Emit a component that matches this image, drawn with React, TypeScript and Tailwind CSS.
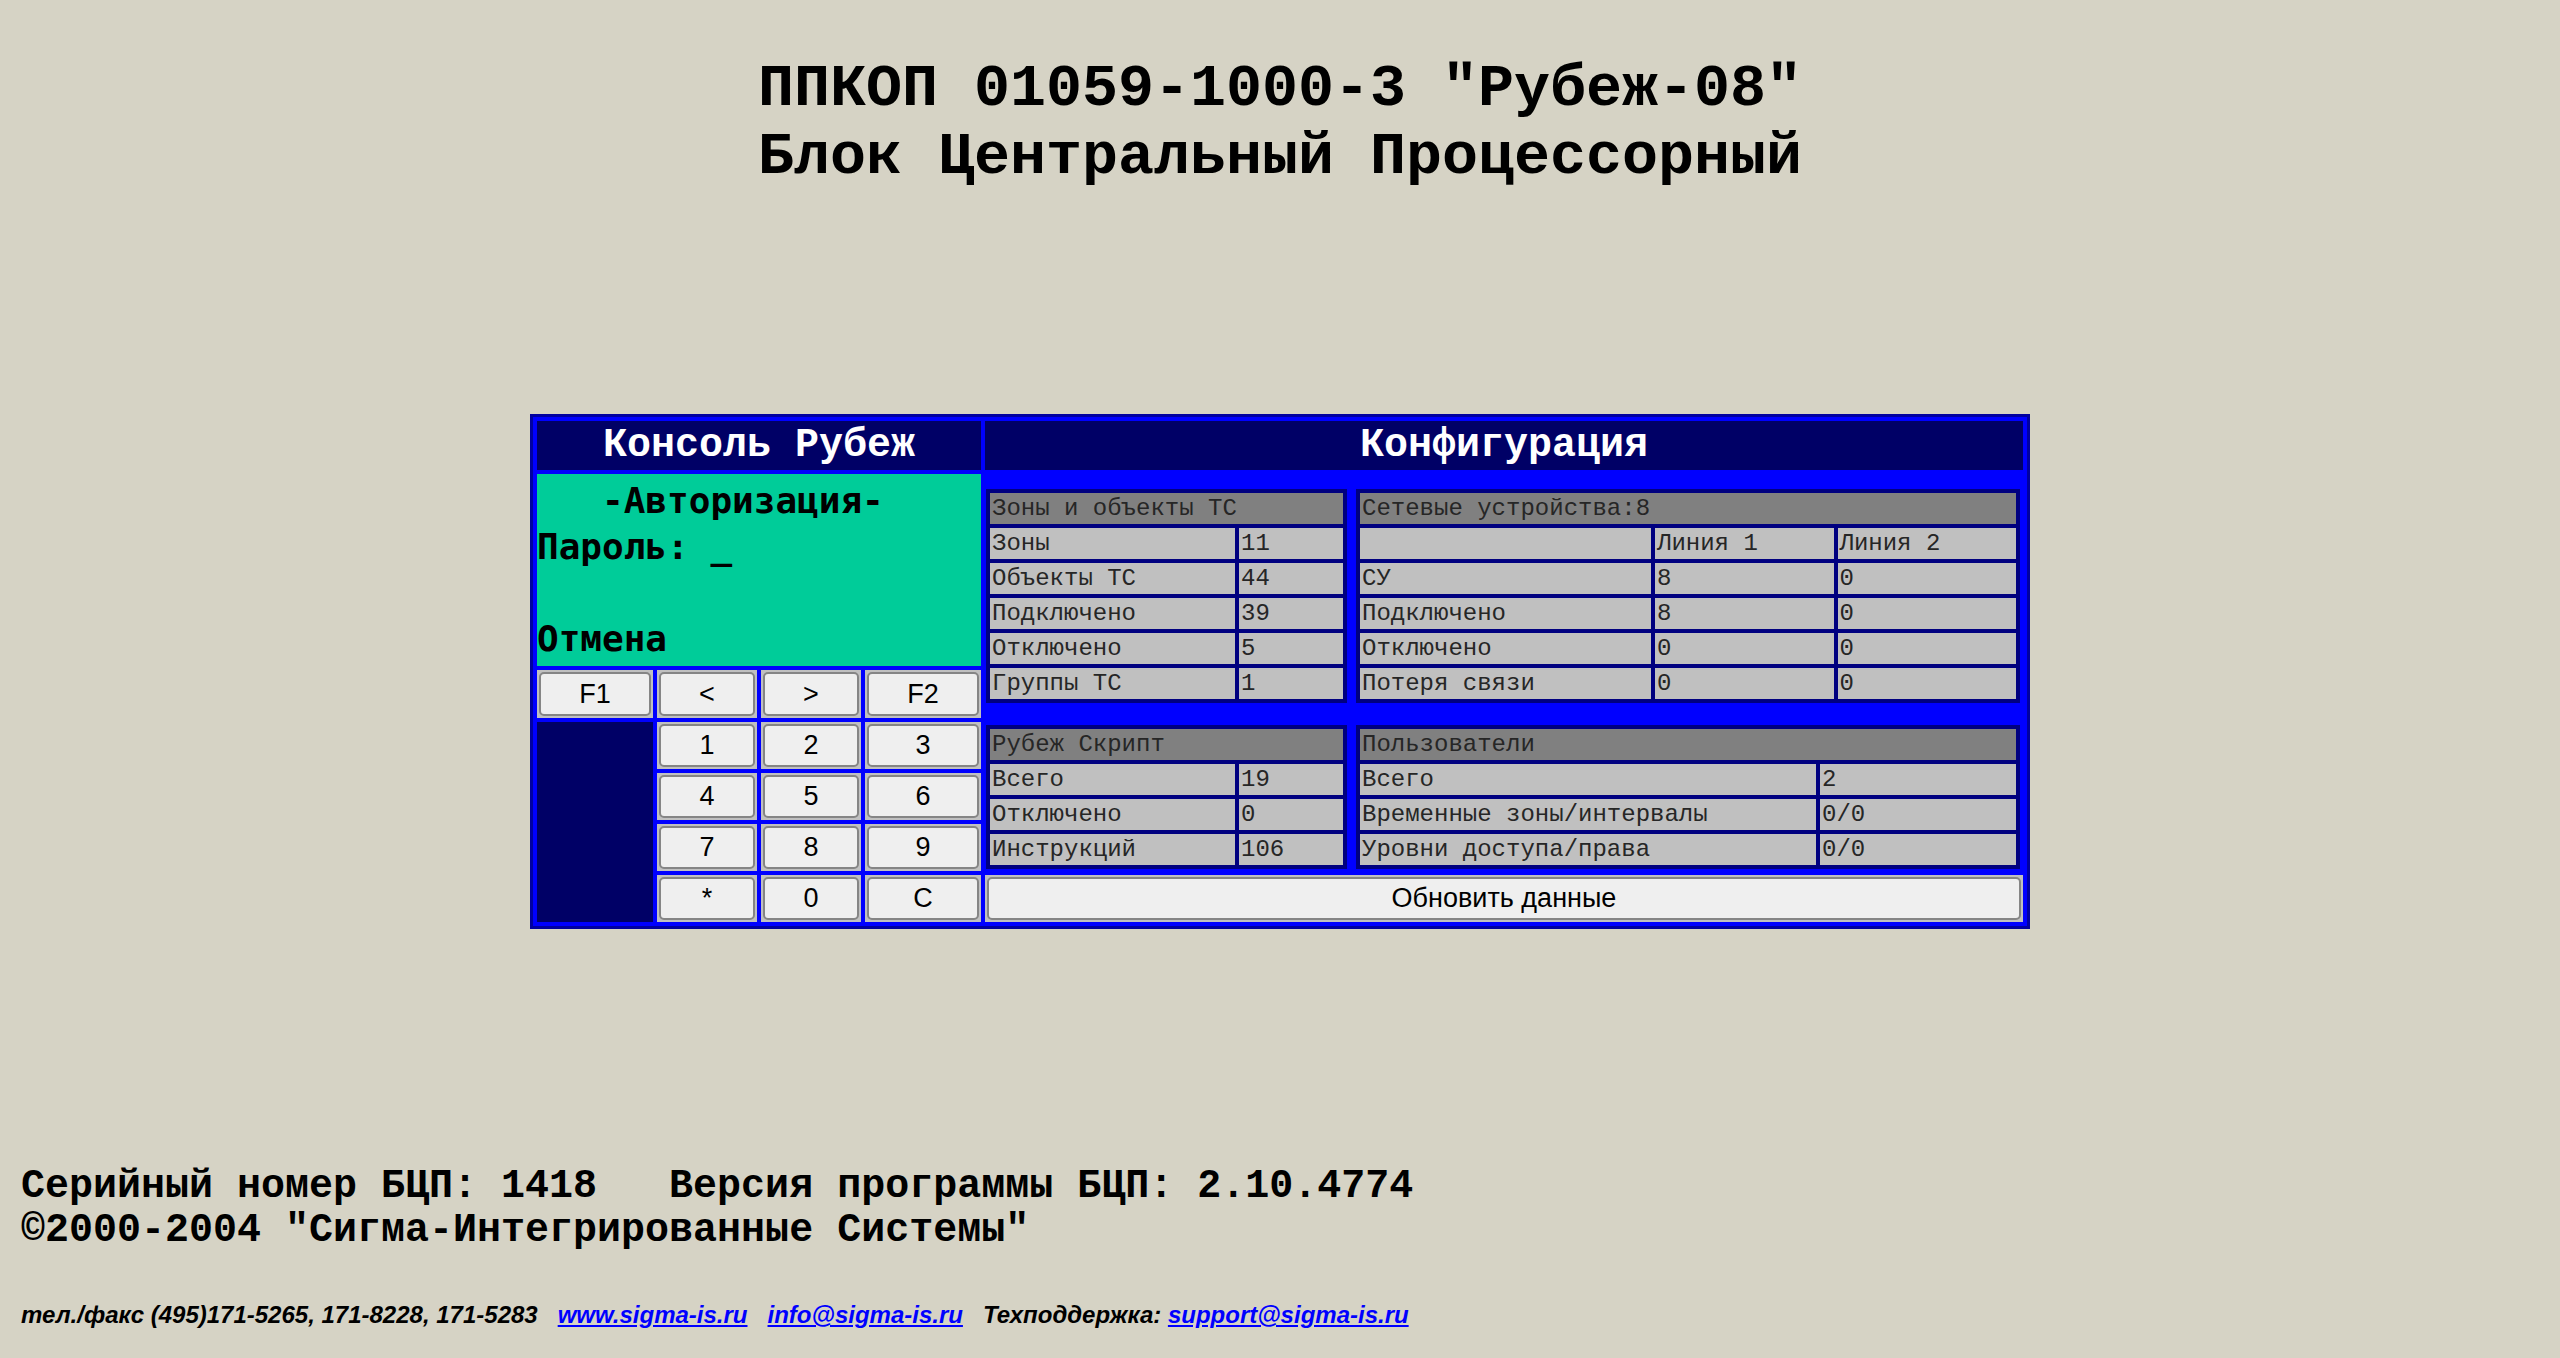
import React from 'react';

type Row = string[];

interface DataTableProps {
  title: string;
  cols: string;
  width: string;
  rows: Row[];
}

const mono = "font-['Liberation_Mono','Courier_New',monospace]";
const sans = "font-['Liberation_Sans',Arial,sans-serif]";

// Inner config tables (navy frame, grey cells)
function DataTable({ title, cols, width, rows }: DataTableProps) {
  return (
    <div className={`${width} bg-[#000080] p-[4px] grid ${cols} gap-[4px] ${mono} text-[24px] text-[#262626]`}>
      <div className="col-span-full h-[31px] leading-[31px] bg-[#808080] pl-[2px] whitespace-pre">{title}</div>
      {rows.map((row, i) =>
        row.map((cell, j) => (
          <div key={`${i}-${j}`} className="h-[31px] leading-[31px] bg-[#c0c0c0] pl-[2px] whitespace-pre overflow-hidden">
            {cell}
          </div>
        ))
      )}
    </div>
  );
}

function Key({ label, className = '' }: { label: string; className?: string }) {
  return (
    <div className={`bg-[#c0c0c0] p-[2px] ${className}`}>
      <button className={`w-full h-full rounded-[5px] border-2 border-[#858585] bg-[#efefef] ${sans} text-[27px] leading-none text-black`}>
        {label}
      </button>
    </div>
  );
}

export default function App() {
  const keypad = [
    ['1', '2', '3'],
    ['4', '5', '6'],
    ['7', '8', '9'],
    ['*', '0', 'C'],
  ];

  return (
    <div className="min-h-screen bg-[#d6d3c5] text-black">
      {/* Title */}
      <div className={`pt-[55px] text-center ${mono} font-bold text-[60px] leading-[68px]`}>
        <div>ППКОП 01059-1000-3 "Рубеж-08"</div>
        <div>Блок Центральный Процессорный</div>
      </div>

      {/* Console + configuration table */}
      <div className="mx-auto mt-[223px] w-[1500px] border-[3px] border-[#0000a0] bg-[#0000ff] p-[4px] grid grid-cols-[116px_100px_100px_116px_1038px] grid-rows-[49px_192px_48px_47px_47px_47px_47px] gap-[4px]">
        <div className={`col-start-1 col-span-4 row-start-1 bg-[#000066] text-center text-white ${mono} font-bold text-[40px] leading-[49px]`}>
          Консоль Рубеж
        </div>
        <div className={`col-start-5 row-start-1 bg-[#000066] text-center text-white ${mono} font-bold text-[40px] leading-[49px]`}>
          Конфигурация
        </div>

        {/* LCD */}
        <div className="col-start-1 col-span-4 row-start-2 bg-[#00cc99] pt-[4px] font-['DejaVu_Sans_Mono',monospace] font-bold text-[36px] leading-[46px] whitespace-pre text-black">
          <div>{'   -Авторизация-'}</div>
          <div>Пароль: _</div>
          <div>{' '}</div>
          <div>Отмена</div>
        </div>

        {/* Top config tables */}
        <div className="col-start-5 row-start-2 row-span-2 flex items-center gap-[9px] pl-[1px]">
          <DataTable
            title="Зоны и объекты ТС"
            width="w-[361px]"
            cols="grid-cols-[245px_1fr]"
            rows={[
              ['Зоны', '11'],
              ['Объекты ТС', '44'],
              ['Подключено', '39'],
              ['Отключено', '5'],
              ['Группы ТС', '1'],
            ]}
          />
          <DataTable
            title="Сетевые устройства:8"
            width="w-[664px]"
            cols="grid-cols-[291px_1fr_1fr]"
            rows={[
              ['', 'Линия 1', 'Линия 2'],
              ['СУ', '8', '0'],
              ['Подключено', '8', '0'],
              ['Отключено', '0', '0'],
              ['Потеря связи', '0', '0'],
            ]}
          />
        </div>

        {/* Function keys */}
        <Key label="F1" className="col-start-1 row-start-3" />
        <Key label="<" className="col-start-2 row-start-3" />
        <Key label=">" className="col-start-3 row-start-3" />
        <Key label="F2" className="col-start-4 row-start-3" />

        <div className="col-start-1 row-start-4 row-span-4 bg-[#000066]" />

        {keypad.map((row, r) =>
          row.map((k, c) => (
            <Key
              key={k}
              label={k}
              className={[
                ['row-start-4', 'row-start-5', 'row-start-6', 'row-start-7'][r],
                ['col-start-2', 'col-start-3', 'col-start-4'][c],
              ].join(' ')}
            />
          ))
        )}

        {/* Bottom config tables */}
        <div className="col-start-5 row-start-4 row-span-3 flex items-center gap-[9px] pl-[1px]">
          <DataTable
            title="Рубеж Скрипт"
            width="w-[361px]"
            cols="grid-cols-[245px_1fr]"
            rows={[
              ['Всего', '19'],
              ['Отключено', '0'],
              ['Инструкций', '106'],
            ]}
          />
          <DataTable
            title="Пользователи"
            width="w-[664px]"
            cols="grid-cols-[456px_1fr]"
            rows={[
              ['Всего', '2'],
              ['Временные зоны/интервалы', '0/0'],
              ['Уровни доступа/права', '0/0'],
            ]}
          />
        </div>

        <Key label="Обновить данные" className="col-start-5 row-start-7" />
      </div>

      {/* Footer */}
      <div className="mt-[236px] pl-[21px] pb-[20px]">
        <div className={`${mono} font-bold text-[40px] leading-[44px] whitespace-pre`}>
          <div>{'Серийный номер БЦП: 1418   Версия программы БЦП: 2.10.4774'}</div>
          <div>©2000-2004 "Сигма-Интегрированные Системы"</div>
        </div>
        <div className={`mt-[48px] ${sans} font-bold italic text-[24px] leading-[28px] whitespace-pre`}>
          {'тел./факс (495)171-5265, 171-8228, 171-5283   '}
          <a href="#" className="text-[#0000ff] underline">www.sigma-is.ru</a>
          {'   '}
          <a href="#" className="text-[#0000ff] underline">info@sigma-is.ru</a>
          {'   Техподдержка: '}
          <a href="#" className="text-[#0000ff] underline">support@sigma-is.ru</a>
        </div>
      </div>
    </div>
  );
}
